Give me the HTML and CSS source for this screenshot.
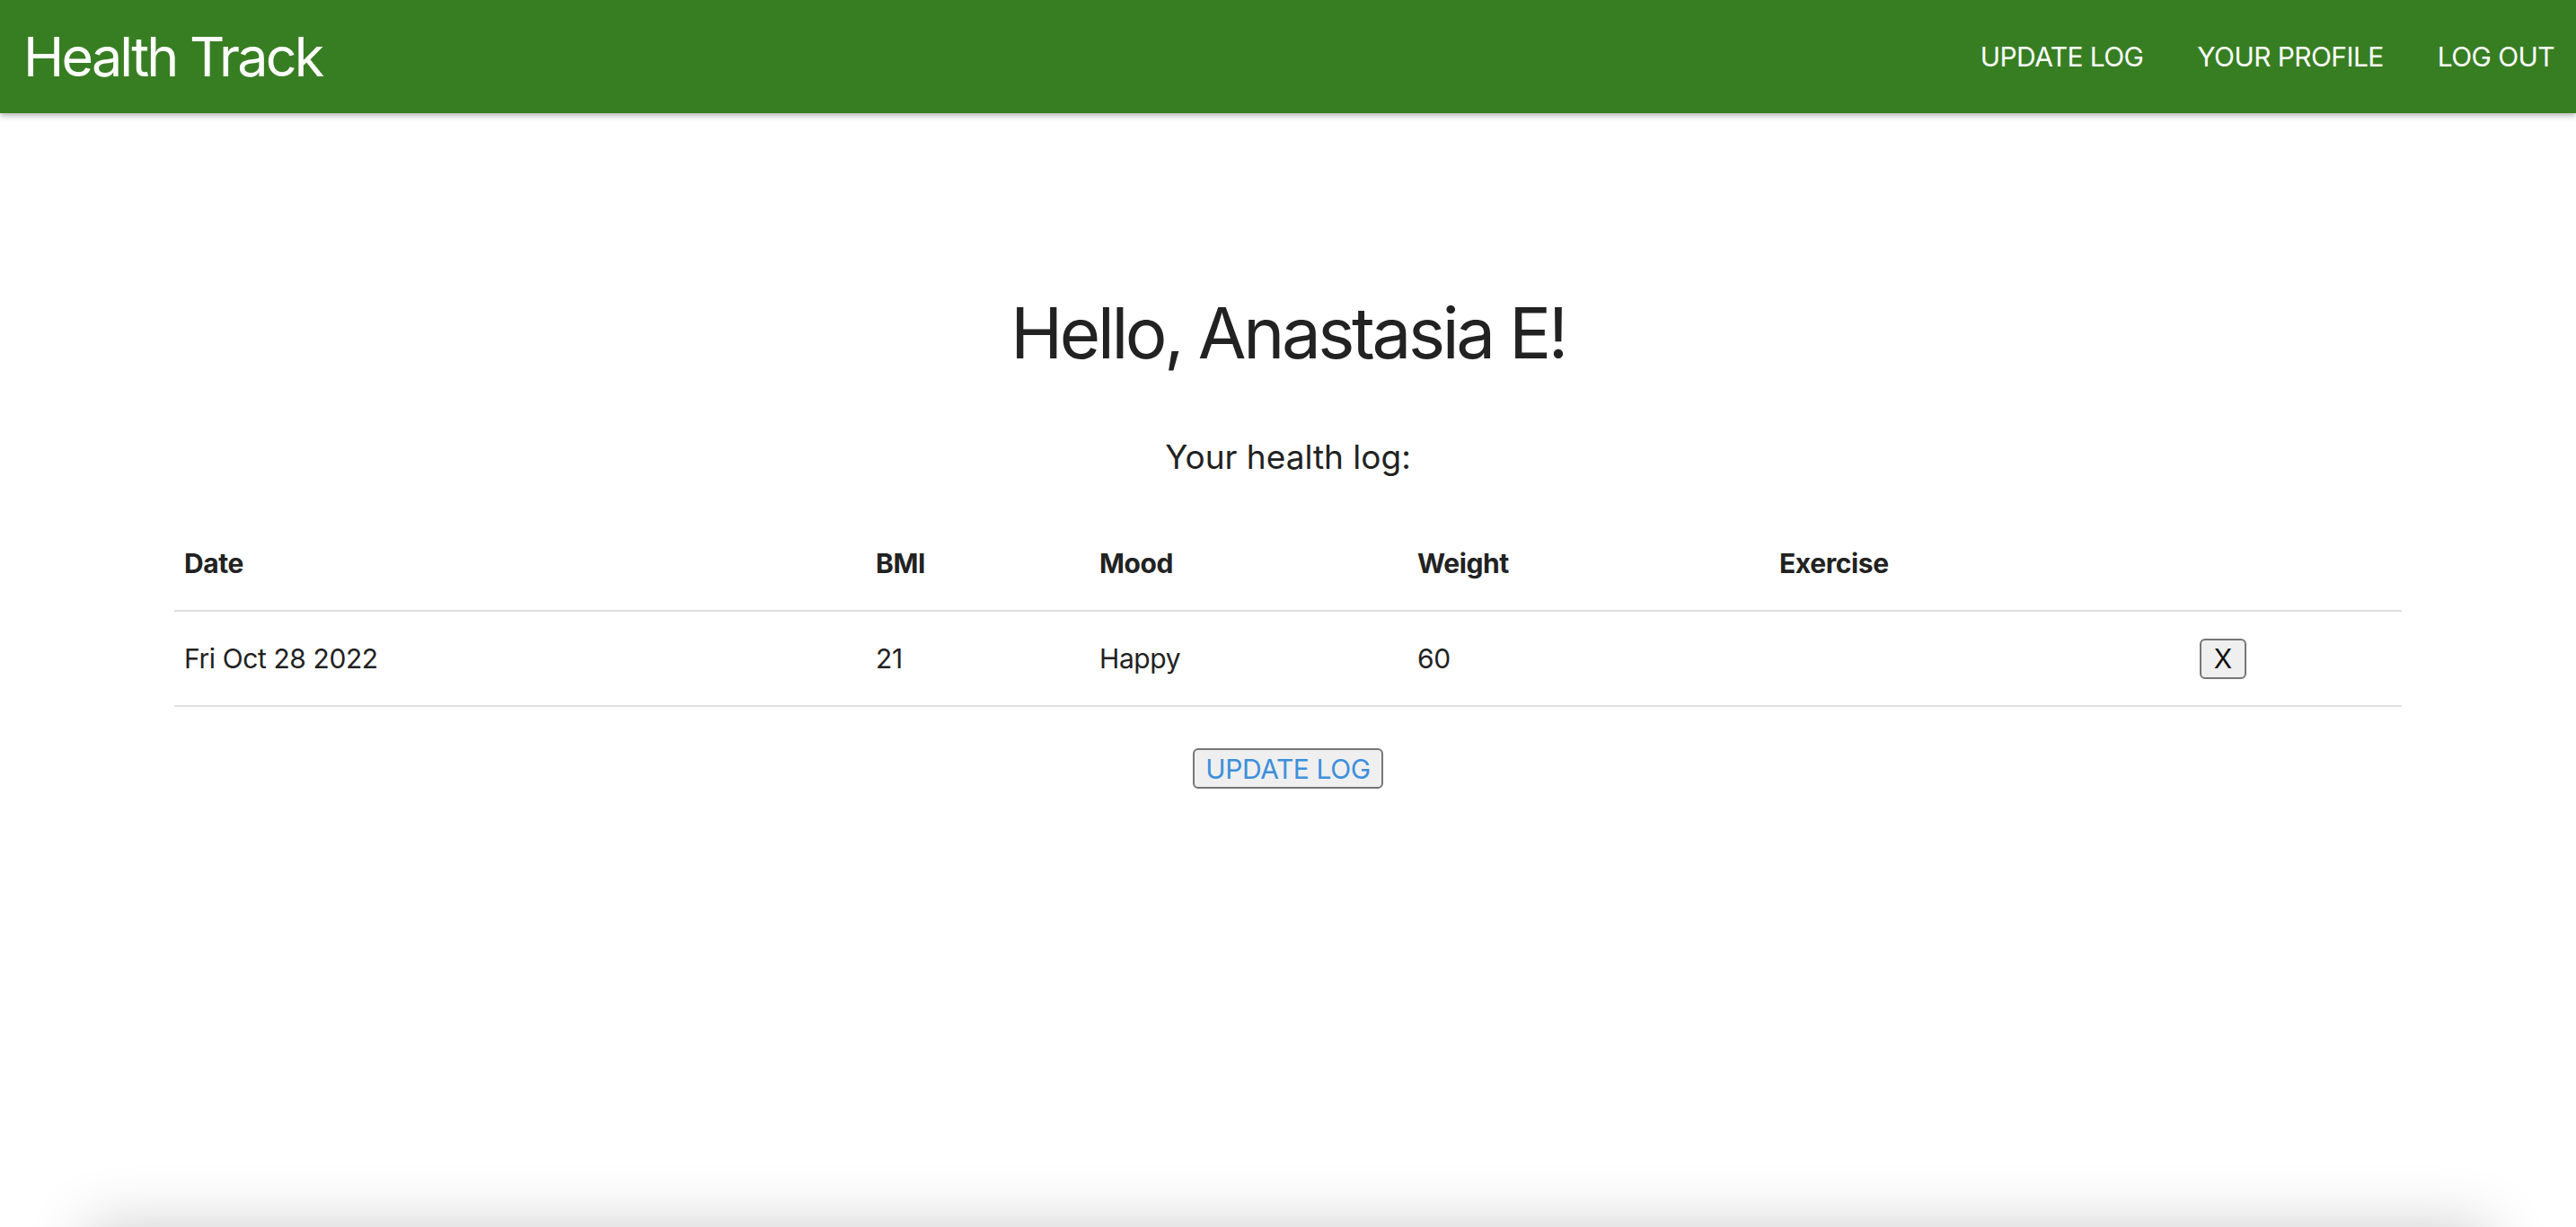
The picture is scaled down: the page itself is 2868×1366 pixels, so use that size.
FILE: index.html
```html
<!DOCTYPE html>
<html lang="en">
<head>
<meta charset="utf-8">
<title>Health Track</title>
<link rel="stylesheet" href="styles.css">
</head>
<body>
<header class="appbar">
  <div class="brand">Health Track</div>
  <nav class="nav">
    <a class="nav-link" href="#">UPDATE LOG</a>
    <a class="nav-link" href="#">YOUR PROFILE</a>
    <a class="nav-link" href="#">LOG OUT</a>
  </nav>
</header>
<main class="main">
  <h1 class="greeting">Hello, Anastasia E!</h1>
  <p class="subtitle">Your health log:</p>
  <table class="log">
    <colgroup>
      <col class="c-date"><col class="c-bmi"><col class="c-mood"><col class="c-weight"><col class="c-ex"><col class="c-act">
    </colgroup>
    <thead>
      <tr><th>Date</th><th>BMI</th><th>Mood</th><th>Weight</th><th>Exercise</th><th></th></tr>
    </thead>
    <tbody>
      <tr><td>Fri Oct 28 2022</td><td>21</td><td>Happy</td><td>60</td><td></td><td><button class="btn btn-x">X</button></td></tr>
    </tbody>
  </table>
  <div class="actions"><button class="btn btn-update">UPDATE LOG</button></div>
</main>
<footer class="sheet"></footer>
</body>
</html>
```
FILE: styles.css
```css
html, body { margin: 0; padding: 0; }
body {
  font-family: Inter, "Noto Sans", "Liberation Sans", sans-serif;
  color: #222;
  background: #fff;
  overflow: hidden;
}
.appbar {
  height: 126px;
  background: #377e22;
  color: #fff;
  display: flex;
  align-items: center;
  justify-content: space-between;
  padding: 0 24px 0 26px;
  box-shadow: 0 3px 6px rgba(0,0,0,0.28);
  position: relative;
  z-index: 2;
}
.brand {
  font-size: 61px;
  line-height: 1;
  letter-spacing: -2.8px;
  font-weight: 400;
}
.nav { display: flex; gap: 60px; }
.nav-link {
  color: #fff;
  text-decoration: none;
  font-size: 30px;
  letter-spacing: -0.6px;
}
.main {
  min-height: calc(100vh - 126px);
  padding-top: 197px;
  box-sizing: border-box;
  text-align: center;
}
.greeting {
  margin: 0;
  font-size: 78px;
  line-height: 96px;
  font-weight: 400;
  letter-spacing: -3.4px;
}
.subtitle {
  margin: 68px 0 0;
  font-size: 37px;
  line-height: 44px;
  letter-spacing: 0px;
}
.log {
  margin: 43px auto 0;
  width: 2480px;
  table-layout: fixed;
  border-collapse: collapse;
  text-align: left;
  font-size: 30px;
  letter-spacing: -0.4px;
}
.c-date { width: 770px; }
.c-bmi { width: 249px; }
.c-mood { width: 354px; }
.c-weight { width: 403px; }
.c-ex { width: 468px; }
.c-act { width: 236px; }
.log th, .log td {
  height: 106px;
  padding: 0 11px;
  border-bottom: 2px solid #e0e0e0;
  vertical-align: middle;
  box-sizing: border-box;
}
.log th { font-weight: 700; }
.btn {
  font-family: Inter, "Noto Sans", "Liberation Sans", sans-serif;
  background: #efefef;
  border: 2px solid #767676;
  border-radius: 6px;
  height: 45px;
  font-size: 30px;
  line-height: 1;
  cursor: pointer;
}
.btn-x {
  width: 52px;
  padding: 0;
  color: #111;
  display: block;
}
.actions { margin-top: 46px; }
.btn-update {
  width: 212px;
  padding: 0;
  color: #3d8fdb;
  letter-spacing: -0.4px;
}
.sheet {
  height: 200px;
  margin: 0 96px;
  background: #fff;
  box-shadow: 0 0 70px rgba(0,0,0,0.2);
}
```
